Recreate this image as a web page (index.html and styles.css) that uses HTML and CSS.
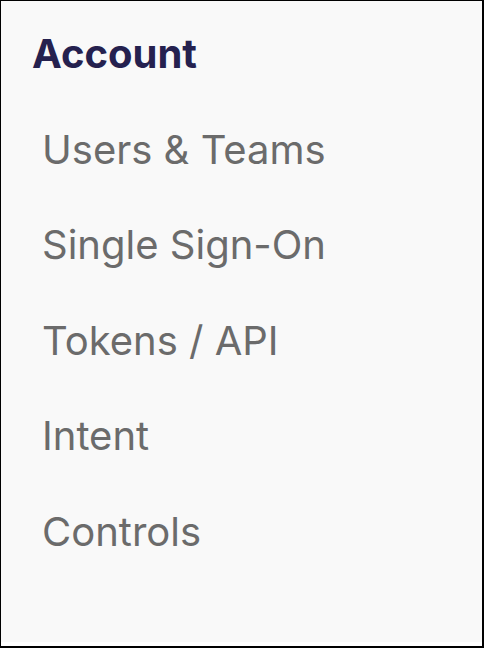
FILE: index.html
```html
<!DOCTYPE html>
<html lang="en">
<head>
<meta charset="utf-8">
<title>Account</title>
<link rel="stylesheet" href="styles.css">
</head>
<body>
<div class="frame">
  <nav class="panel">
    <h2 class="title">Account</h2>
    <ul class="menu">
      <li class="item">Users &amp; Teams</li>
      <li class="item">Single Sign-On</li>
      <li class="item">Tokens / API</li>
      <li class="item">Intent</li>
      <li class="item">Controls</li>
    </ul>
  </nav>
</div>
</body>
</html>
```
FILE: styles.css
```css
html, body {
  margin: 0;
  padding: 0;
  background: #ffffff;
}
.frame {
  box-sizing: border-box;
  width: 484px;
  height: 648px;
  border-top: 1px solid #000;
  border-left: 1px solid #000;
  border-right: 2px solid #000;
  border-bottom: 2px solid #000;
  padding-bottom: 4px;
  display: flex;
  flex-direction: column;
  background: #ffffff;
}
.panel {
  flex: 1;
  background: #f9f9f9;
  padding: 5px 0 0 31px;
  font-family: Inter, "Liberation Sans", sans-serif;
}
.title {
  margin: 0;
  font-size: 40px;
  line-height: 95.5px;
  font-weight: 700;
  color: #25214f;
}
.menu {
  list-style: none;
  margin: 0;
  padding: 0 0 0 10px;
}
.item {
  font-size: 40px;
  line-height: 95.5px;
  font-weight: 400;
  color: #6b6b6b;
}
```
